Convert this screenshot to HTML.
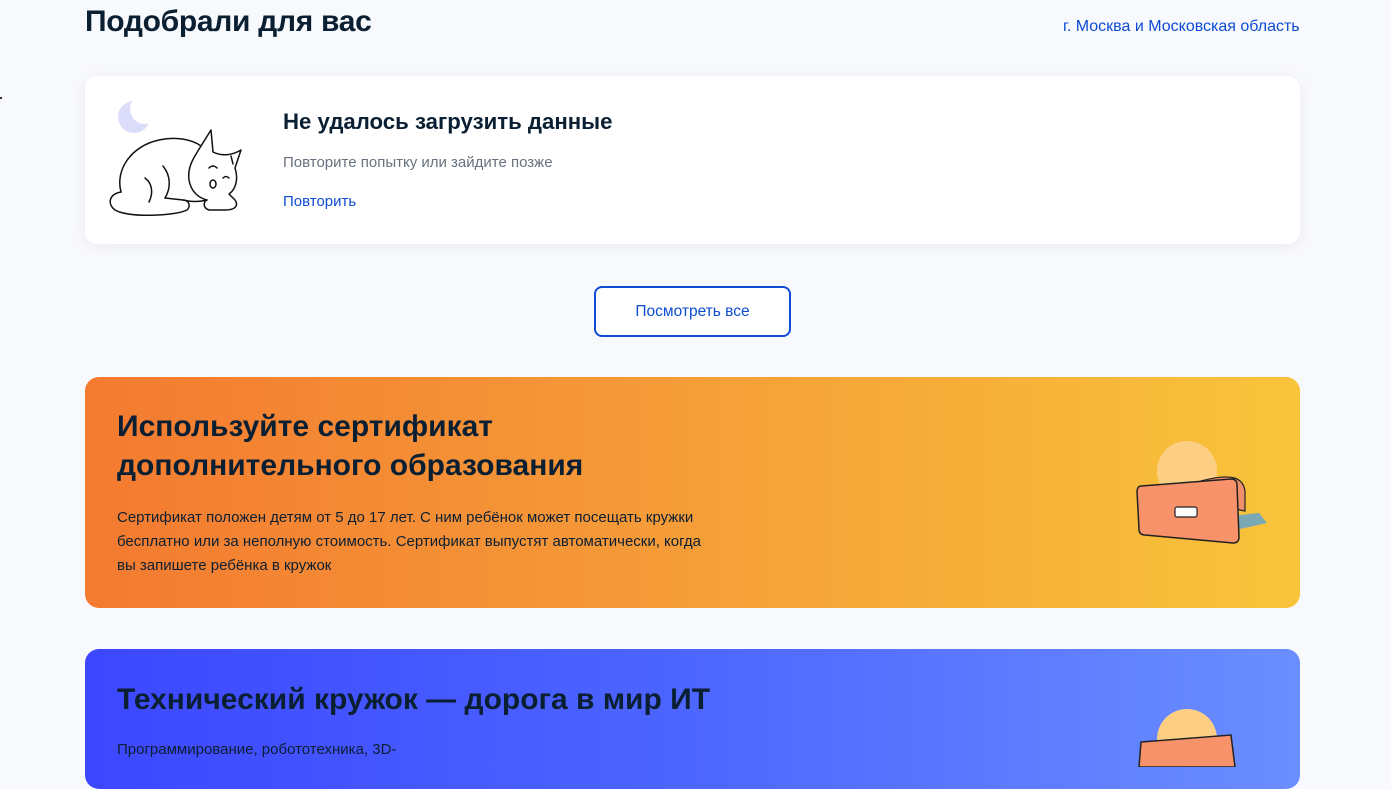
<!DOCTYPE html>
<html><head><meta charset="utf-8"><style>
body{margin:0;width:1391px;height:758px;overflow:hidden;background:#f8f9fc;font-family:"Liberation Sans",sans-serif;color:#0b1f33;position:relative}
.a{position:absolute}
h1{margin:0;font-size:30px;font-weight:bold;letter-spacing:-0.3px}
.card{left:85px;top:76px;width:1215px;height:168px;background:#fff;border-radius:12px;box-shadow:0 2px 14px rgba(0,20,60,.06)}
.btn{left:594px;top:286px;width:193px;height:47px;border:2px solid #0d4cd3;border-radius:8px;color:#0d4cd3;font-size:15.5px;display:flex;align-items:center;justify-content:center;background:#fff}
.ban{left:85px;width:1215px;border-radius:14px}
.ban h2{margin:0;font-size:30px;line-height:39px;font-weight:bold;position:absolute;left:32px}
.ban p{margin:0;font-size:15px;line-height:24px;position:absolute;left:32px;width:600px}
</style></head><body>
<div class="a" style="left:0;top:97px;width:2px;height:2px;background:#333"></div>
<h1 class="a" style="left:85px;top:5px">Подобрали для вас</h1>
<div class="a" style="left:1063px;top:18px;font-size:16px;color:#0d4cd3">г. Москва и Московская область</div>
<div class="a card">
<svg class="a" style="left:20px;top:20px" width="140" height="130" viewBox="0 0 140 130">
<circle cx="29" cy="21" r="16" fill="#dcdcfb"/>
<circle cx="40" cy="13" r="15" fill="#fff"/>
<g fill="none" stroke="#111" stroke-width="1.5" stroke-linejoin="round" stroke-linecap="round">
<path d="M16 96 C10 74 26 50 54 44 C72 40 88 44 96 50 L106 34 L108 56 C116 60 126 60 136 54 L130 72 C134 84 130 94 124 98 L130 104 C134 110 130 114 120 114 L104 114 C98 112 98 106 102 104 C94 106 86 106 78 104"/>
<path d="M16 96 C4 98 2 108 10 114 C24 122 70 120 82 114 C86 110 84 104 78 104 L60 102"/>
<path d="M96 50 C90 60 82 70 84 84 C86 96 94 102 102 104"/>
<path d="M58 70 C66 80 66 92 60 102"/><path d="M40 82 C48 88 48 98 44 106"/>
<path d="M104 72 q4 -4 8 0"/><path d="M118 82 q3 -3 6 0"/><ellipse cx="108" cy="88" rx="3" ry="4"/>
<path d="M126 60 L128 68"/>
</g></svg>
<div class="a" style="left:198px;top:33px;font-size:22.2px;font-weight:bold">Не удалось загрузить данные</div>
<div class="a" style="left:198px;top:78px;font-size:15px;color:#66727f">Повторите попытку или зайдите позже</div>
<div class="a" style="left:198px;top:117px;font-size:15px;color:#0d4cd3">Повторить</div>
</div>
<div class="a btn">Посмотреть все</div>
<div class="a ban" style="top:377px;height:231px;background:linear-gradient(90deg,#f37a30 0%,#f59a38 45%,#f8c43a 100%)">
<h2 style="top:30px">Используйте сертификат<br>дополнительного образования</h2>
<p style="top:129px">Сертификат положен детям от 5 до 17 лет. С ним ребёнок может посещать кружки бесплатно или за неполную стоимость. Сертификат выпустят автоматически, когда вы запишете ребёнка в кружок</p>
<svg class="a" style="left:1050px;top:62px" width="140" height="110" viewBox="0 0 140 110">
<path d="M60 100 L132 84 L124 74 L70 80Z" fill="#5aa3d4" opacity=".8"/>
<circle cx="52" cy="32" r="30" fill="#fdcf85"/>
<path d="M66 42 C96 34 108 38 110 52 L110 72 L100 70 L100 50 L68 60Z" fill="#f0906a" stroke="#222" stroke-width="1.2"/>
<path d="M6 47 L96 40 C100 40 102 42 102 46 L104 98 C104 102 102 104 98 104 L10 96 C6 96 4 94 4 90 L2 52 C2 49 4 47 6 47Z" fill="#f7926a" stroke="#222" stroke-width="1.5"/>
<rect x="40" y="68" width="22" height="10" rx="2" fill="#fff" stroke="#222" stroke-width="1.2"/>
</svg>
</div>
<div class="a ban" style="top:649px;height:140px;background:linear-gradient(90deg,#3c47ff 0%,#4d66ff 50%,#6a8eff 100%)">
<h2 style="top:31px">Технический кружок — дорога в мир ИТ</h2>
<p style="top:89px">Программирование, робототехника, 3D-</p>
<svg class="a" style="left:1050px;top:58px" width="140" height="60" viewBox="0 0 140 60">
<circle cx="52" cy="32" r="30" fill="#fdcf85"/>
<path d="M6 35 L96 28 L100 60 L4 60Z" fill="#f7926a" stroke="#222" stroke-width="1.5"/>
</svg>
</div>
</body></html>
